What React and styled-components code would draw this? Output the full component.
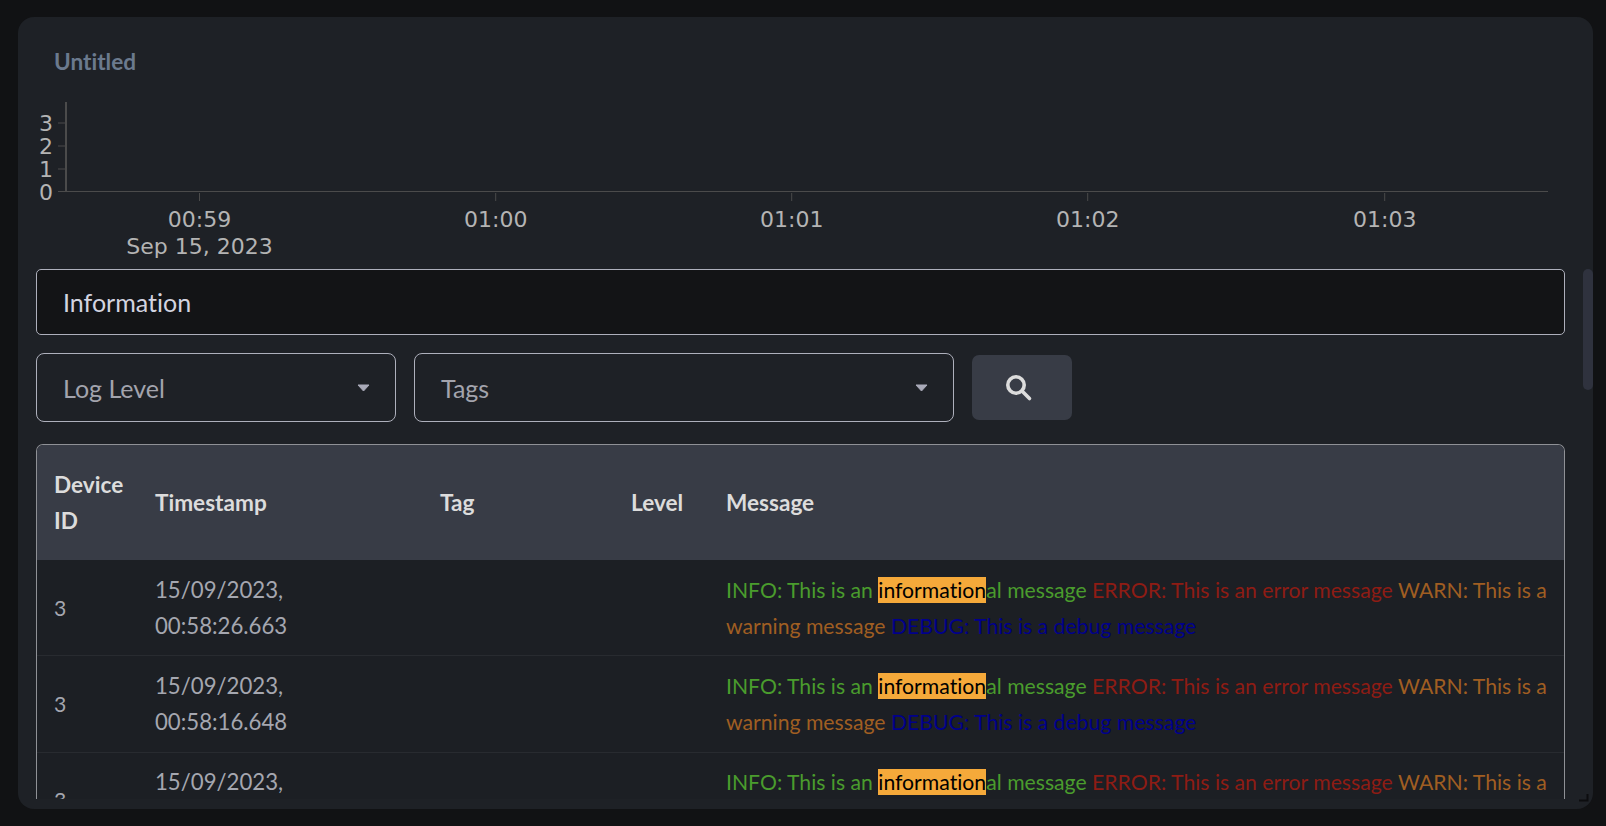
import React from "react";
import styled, { createGlobalStyle } from "styled-components";

const Global = createGlobalStyle`
  html, body { margin: 0; padding: 0; background: #111214; }
  body { font-family: Lato, "Noto Sans", sans-serif; overflow: hidden; font-variant-ligatures: none; }
`;

const Page = styled.div`
  height: 826px;
  padding: 17px 13px 17px 18px;
  box-sizing: border-box;
`;

const Panel = styled.section`
  position: relative;
  height: 792px;
  background: #1e2126;
  border-radius: 16px;
  overflow: hidden;
  padding: 0 28px 10px 18px;
  box-sizing: border-box;
  display: flex;
  flex-direction: column;
`;

const Title = styled.h2`
  margin: 30px 0 0 18px;
  font-size: 22.6px;
  line-height: 29px;
  font-weight: 700;
  color: #6b7a8e;
`;

const Chart = styled.svg`
  display: block;
  width: 1529px;
  height: 182px;
  margin-top: 11px;
  flex: none;
`;

const AxisText = styled.text`
  font-family: "DejaVu Sans", sans-serif;
  font-size: 22px;
  fill: #b4b4b4;
`;

const SearchInput = styled.div`
  height: 66px;
  flex: none;
  box-sizing: border-box;
  display: flex;
  align-items: center;
  padding-left: 26px;
  background: #131416;
  border: 1px solid #aeb0bc;
  border-radius: 5px;
  font-size: 25px;
  color: #d3d4e0;
`;

const Filters = styled.div`
  display: flex;
  align-items: center;
  gap: 18px;
  margin-top: 18px;
  flex: none;
`;

const Select = styled.div`
  width: ${(p) => p.$width}px;
  height: 69px;
  box-sizing: border-box;
  display: flex;
  align-items: center;
  justify-content: space-between;
  padding: 0 25px 0 26px;
  border: 1px solid #aeb0bc;
  border-radius: 8px;
  font-size: 25px;
  color: #a3a4ad;
`;

const Caret = styled.svg`
  width: 13px;
  height: 8px;
  display: block;
`;

const SearchButton = styled.button`
  width: 100px;
  height: 65px;
  border: 0;
  border-radius: 7px;
  background: #383c46;
  display: flex;
  align-items: center;
  justify-content: center;
  padding: 0 6px 0 0;
`;

const TableFrame = styled.div`
  margin-top: 22px;
  flex: 1;
  min-height: 0;
  overflow: hidden;
  box-sizing: border-box;
  border: 1px solid #8f9196;
  border-bottom: 0;
  border-radius: 7px 7px 0 0;
`;

const LogTable = styled.table`
  width: 100%;
  table-layout: fixed;
  border-collapse: collapse;
  font-size: 21.2px;
  line-height: 36px;
`;

const HeadRow = styled.tr`
  background: #383c46;
`;

const HeadCell = styled.th`
  width: ${(p) => (p.$width ? p.$width + "px" : "auto")};
  padding: 22px 17px 21px;
  box-sizing: border-box;
  text-align: left;
  font-size: 22.6px;
  font-weight: 700;
  color: #dcdcdc;
`;

const BodyRow = styled.tr`
  background: #1c1f24;
  border-bottom: 1px solid #282b30;
`;

const Cell = styled.td`
  padding: 11.7px 17px;
  color: #a5a7b0;
  vertical-align: middle;
`;

const TimeCell = styled(Cell)`
  font-size: 22.2px;
`;

const Log = styled.span`
  color: ${(p) => p.$color};
`;

const Mark = styled.mark`
  background: #f5a93a;
  color: #000;
`;

const ScrollThumb = styled.div`
  position: absolute;
  top: 252px;
  right: 0;
  width: 10px;
  height: 121px;
  border-radius: 5px;
  background: #2f323e;
`;

const ResizeHandle = styled.svg`
  position: absolute;
  right: 3px;
  bottom: 5px;
  width: 12px;
  height: 11px;
`;

const ticks = [
  { x: 199.5, label: "00:59" },
  { x: 495.7, label: "01:00" },
  { x: 791.7, label: "01:01" },
  { x: 1087.7, label: "01:02" },
  { x: 1384.7, label: "01:03" },
];

const yTicks = [
  { y: 123, label: "3" },
  { y: 146, label: "2" },
  { y: 169, label: "1" },
  { y: 191.5, label: "0" },
];

const rows = [
  { ts: "00:58:26.663" },
  { ts: "00:58:16.648" },
  { ts: "00:58:06.632" },
];

const CaretIcon = () => (
  <Caret viewBox="0 0 13 8">
    <path d="M1 1h11L6.5 7z" fill="#a9aab8" stroke="#a9aab8" strokeLinejoin="round" />
  </Caret>
);

export default function App() {
  return (
    <Page>
      <Global />
      <Panel>
        <Title>Untitled</Title>
        <Chart viewBox="36 87 1529 182">
          <line x1="66" y1="102" x2="66" y2="192" stroke="#4b4b4b" strokeWidth="2" />
          <line x1="58" y1="191.5" x2="1548" y2="191.5" stroke="#4b4b4b" strokeWidth="1" />
          {yTicks.map((t) => (
            <g key={t.label}>
              <line x1="58" y1={t.y} x2="66" y2={t.y} stroke="#4b4b4b" />
              <AxisText x="53" y={t.y + 8} textAnchor="end">{t.label}</AxisText>
            </g>
          ))}
          {ticks.map((t) => (
            <g key={t.label}>
              <line x1={t.x} y1="193" x2={t.x} y2="201" stroke="#4b4b4b" />
              <AxisText x={t.x} y="227" textAnchor="middle">{t.label}</AxisText>
            </g>
          ))}
          <AxisText x="199.5" y="254" textAnchor="middle">Sep 15, 2023</AxisText>
        </Chart>
        <SearchInput>Information</SearchInput>
        <Filters>
          <Select $width={360}>Log Level<CaretIcon /></Select>
          <Select $width={540}>Tags<CaretIcon /></Select>
          <SearchButton aria-label="Search">
            <svg width="28" height="28" viewBox="0 0 28 28" fill="none" stroke="#dcdcdc" strokeWidth="3.6" strokeLinecap="round">
              <circle cx="11" cy="11" r="8.2" />
              <line x1="17.5" y1="17.5" x2="24.5" y2="24.5" />
            </svg>
          </SearchButton>
        </Filters>
        <TableFrame>
          <LogTable>
            <thead>
              <HeadRow>
                <HeadCell $width={101}>Device ID</HeadCell>
                <HeadCell $width={285}>Timestamp</HeadCell>
                <HeadCell $width={191}>Tag</HeadCell>
                <HeadCell $width={95}>Level</HeadCell>
                <HeadCell>Message</HeadCell>
              </HeadRow>
            </thead>
            <tbody>
              {rows.map((r) => (
                <BodyRow key={r.ts}>
                  <Cell>3</Cell>
                  <TimeCell>15/09/2023,<br />{r.ts}</TimeCell>
                  <Cell />
                  <Cell />
                  <Cell>
                    <Log $color="#4a9c2d">INFO: This is an <Mark>information</Mark>al message</Log>{" "}
                    <Log $color="#8e1c14">ERROR: This is an error message</Log>{" "}
                    <Log $color="#a05e22">WARN: This is a warning message</Log>{" "}
                    <Log $color="#00008b">DEBUG: This is a debug message</Log>
                  </Cell>
                </BodyRow>
              ))}
            </tbody>
          </LogTable>
        </TableFrame>
        <ScrollThumb />
        <ResizeHandle viewBox="0 0 12 11">
          <path d="M9.5 1v6.5H1" fill="none" stroke="#0c0d0f" strokeWidth="2" />
        </ResizeHandle>
      </Panel>
    </Page>
  );
}
